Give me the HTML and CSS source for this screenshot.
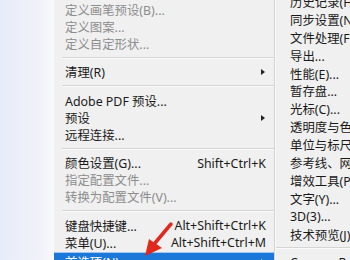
FILE: index.html
```html
<!DOCTYPE html>
<html lang="zh-CN">
<head>
  <meta charset="UTF-8">
  <title>编辑菜单</title>
  <link rel="stylesheet" href="styles.css">
</head>
<body>
  <div class="side"></div>

  <!-- 主菜单 -->
  <div class="menu">
    <div class="item off"><span>定义画笔预设(B)...</span></div>
    <div class="item off"><span>定义图案...</span></div>
    <div class="item off"><span>定义自定形状...</span></div>
    <div class="sep"></div>
    <div class="item"><span>清理(R)</span><span class="arrow"></span></div>
    <div class="sep"></div>
    <div class="item"><span>Adobe PDF 预设...</span></div>
    <div class="item"><span>预设</span><span class="arrow"></span></div>
    <div class="item"><span>远程连接...</span></div>
    <div class="sep"></div>
    <div class="item"><span>颜色设置(G)...</span><span class="key">Shift+Ctrl+K</span></div>
    <div class="item off"><span>指定配置文件...</span></div>
    <div class="item off"><span>转换为配置文件(V)...</span></div>
    <div class="sep"></div>
    <div class="item"><span>键盘快捷键...</span><span class="key">Alt+Shift+Ctrl+K</span></div>
    <div class="item"><span>菜单(U)...</span><span class="key">Alt+Shift+Ctrl+M</span></div>
    <div class="item active"><span>首选项(N)</span><span class="arrow"></span></div>
  </div>

  <div class="vline"></div>

  <!-- 首选项子菜单 -->
  <div class="submenu">
    <div class="item">历史记录(H)...</div>
    <div class="item">同步设置(N)...</div>
    <div class="item">文件处理(F)...</div>
    <div class="item">导出...</div>
    <div class="item">性能(E)...</div>
    <div class="item">暂存盘...</div>
    <div class="item">光标(C)...</div>
    <div class="item">透明度与色域...</div>
    <div class="item">单位与标尺...</div>
    <div class="item">参考线、网格和切片...</div>
    <div class="item">增效工具(P)...</div>
    <div class="item">文字(Y)...</div>
    <div class="item">3D(3)...</div>
    <div class="item">技术预览(J)...</div>
    <div class="sep"></div>
    <div class="item">Camera Raw...</div>
  </div>

  <!-- 红色箭头标注 -->
  <svg class="pointer" width="40" height="40" viewBox="0 0 40 40">
    <line x1="31" y1="3" x2="15" y2="22" stroke="#e0281e" stroke-width="3.5" stroke-linecap="round"/>
    <polygon points="5,35 9,18 22,27" fill="#e0281e"/>
  </svg>
</body>
</html>
```

FILE: styles.css
```css
body {
  margin: 0;
  height: 260px;
  overflow: hidden;
  display: flex;
  background-color: #f0f0f0;
  font-family: 'Noto Sans', 'Noto Sans CJK SC', sans-serif;
  font-size: 12.4px;
  color: #1a1a1a;
}

.side {
  width: 54px;
  flex-shrink: 0;
  background: linear-gradient(to right, #e8ecf8, #f1f3fa 80%, #fbfbfc);
}

.menu {
  width: 220px;
  flex-shrink: 0;
  padding-top: 1px;
}

.menu .item {
  height: 17px;
  display: flex;
  align-items: center;
  justify-content: space-between;
  padding: 0 8px 0 11px;
  white-space: nowrap;
}

.item.off {
  color: #8d8d8d;
}

.item.active {
  margin-top: 1px;
  background-color: #1b78d8;
  border-top: 1px solid #9cc8f0;
  color: #fff;
}

.arrow {
  width: 0;
  height: 0;
  border-top: 3px solid transparent;
  border-bottom: 3px solid transparent;
  border-left: 4px solid #222;
  margin-right: 1px;
}

.active .arrow {
  border-left-color: #fff;
}

.sep {
  height: 11.5px;
  display: flex;
  align-items: center;
  margin-left: 8px;
}

.sep::before {
  content: '';
  flex: 1;
  border-top: 1px solid #d4d4d4;
  border-bottom: 1px solid #fbfbfb;
}

.vline {
  width: 1px;
  flex-shrink: 0;
  background-color: #d2d2d2;
  border-right: 1px solid #fafafa;
}

.submenu {
  flex: 1;
  margin-top: -7px;
  padding-left: 14px;
  white-space: nowrap;
}

.submenu .item {
  height: 17.9px;
  display: flex;
  align-items: center;
}

.submenu .sep {
  height: 10px;
  margin-left: -14px;
}

.pointer {
  position: absolute;
  left: 140px;
  top: 221px;
}
```
